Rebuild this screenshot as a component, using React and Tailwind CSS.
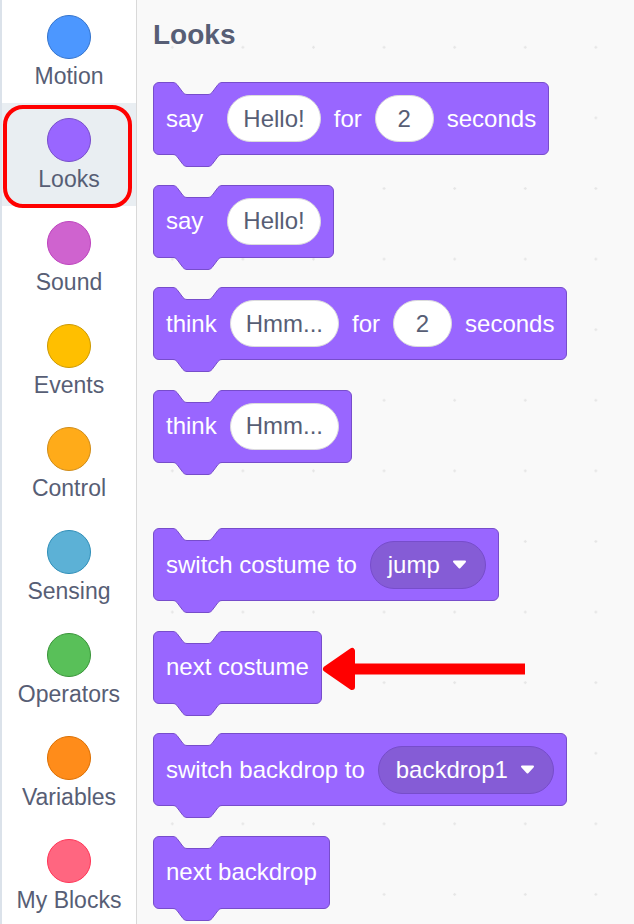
import React from "react";

const FONT = { fontFamily: '"Liberation Sans", Arial, sans-serif' };

const categories = [
  { name: "Motion", fill: "bg-[#4c97ff]", border: "border-[#3373cc]" },
  { name: "Looks", fill: "bg-[#9966ff]", border: "border-[#774dcb]", selected: true },
  { name: "Sound", fill: "bg-[#cf63cf]", border: "border-[#bd42bd]" },
  { name: "Events", fill: "bg-[#ffbf00]", border: "border-[#cc9900]" },
  { name: "Control", fill: "bg-[#ffab19]", border: "border-[#cf8b17]" },
  { name: "Sensing", fill: "bg-[#5cb1d6]", border: "border-[#2e8eb8]" },
  { name: "Operators", fill: "bg-[#59c059]", border: "border-[#389438]" },
  { name: "Variables", fill: "bg-[#ff8c1a]", border: "border-[#db6e00]" },
  { name: "My Blocks", fill: "bg-[#ff6680]", border: "border-[#ff3355]" },
];

function Category({ c }) {
  return (
    <div
      className={
        "relative flex h-[103px] shrink-0 flex-col items-center pt-[15px] " +
        (c.selected ? "bg-[#e9eef2]" : "")
      }
    >
      <div className={"h-[44px] w-[44px] rounded-full border " + c.fill + " " + c.border} />
      <div className="mt-[3px] text-[23px] leading-[28px] text-[#575e75]">{c.name}</div>
      {c.selected && (
        <div className="absolute left-[1px] top-[2px] h-[103px] w-[129px] rounded-[20px] border-[4.5px] border-[#ff0000]" />
      )}
    </div>
  );
}

function Notch() {
  return (
    <svg
      className="absolute left-[19px] top-[-1px]"
      width="49"
      height="14"
      viewBox="0 0 49 14"
    >
      <path
        d="M0,0.5 C2,0.5 3,1.5 4,2.5 L10,10.5 C11,11.5 12,12.5 14,12.5 H35 C37,12.5 38,11.5 39,10.5 L45,2.5 C46,1.5 47,0.5 49,0.5 V0 H0 Z"
        fill="#f9f9f9"
      />
      <path
        d="M0,0.5 C2,0.5 3,1.5 4,2.5 L10,10.5 C11,11.5 12,12.5 14,12.5 H35 C37,12.5 38,11.5 39,10.5 L45,2.5 C46,1.5 47,0.5 49,0.5"
        fill="none"
        stroke="#774dcb"
        strokeWidth="1"
      />
    </svg>
  );
}

function Tab() {
  return (
    <svg
      className="absolute left-[19px] top-full"
      width="49"
      height="14"
      viewBox="0 0 49 14"
    >
      <path
        d="M0,0 H49 V0.5 C47,0.5 46,1.5 45,2.5 L39,10.5 C38,11.5 37,12.5 35,12.5 H14 C12,12.5 11,11.5 10,10.5 L4,2.5 C3,1.5 2,0.5 0,0.5 Z"
        fill="#9966ff"
      />
      <path
        d="M0,0.5 C2,0.5 3,1.5 4,2.5 L10,10.5 C11,11.5 12,12.5 14,12.5 H35 C37,12.5 38,11.5 39,10.5 L45,2.5 C46,1.5 47,0.5 49,0.5"
        fill="none"
        stroke="#774dcb"
        strokeWidth="1"
      />
    </svg>
  );
}

function Label({ text, extra }) {
  return <span className={"whitespace-nowrap " + (extra ? "mr-[11px]" : "")}>{text}</span>;
}

function TextInput({ text }) {
  return (
    <span className="flex h-[47px] items-center whitespace-nowrap rounded-full border border-[#dcdcdc] bg-white px-[15px] text-[#575e75]">
      {text}
    </span>
  );
}

function NumInput({ text }) {
  return (
    <span className="flex h-[47px] w-[59px] items-center justify-center rounded-full border border-[#dcdcdc] bg-white text-[#575e75]">
      {text}
    </span>
  );
}

function Dropdown({ text }) {
  return (
    <span className="flex h-[48px] items-center gap-[12px] whitespace-nowrap rounded-full border border-[#774dcb] bg-[#855cd6] pl-[17px] pr-[18px] text-white">
      <span>{text}</span>
      <svg width="15" height="9" viewBox="0 0 15 9">
        <path d="M2,1.5 H13 L7.5,7.5 Z" fill="#ffffff" stroke="#ffffff" strokeWidth="2" strokeLinejoin="round" />
      </svg>
    </span>
  );
}

function Block({ children, className = "" }) {
  return (
    <div
      className={
        "relative flex h-[73px] w-fit items-center gap-[13px] rounded-[6px] border border-[#774dcb] bg-[#9966ff] pl-[12px] pr-[12px] text-[24px] text-white " +
        className
      }
    >
      <Notch />
      {children}
      <Tab />
    </div>
  );
}

export default function App() {
  return (
    <div className="flex h-[924px] w-[634px] overflow-hidden bg-[#f9f9f9]" style={FONT}>
      <div className="flex w-[137px] shrink-0 flex-col border-l-2 border-r border-l-[#dbe2ea] border-r-[#d9d9d9] bg-white">
        {categories.map((c) => (
          <Category key={c.name} c={c} />
        ))}
      </div>
      <div className="relative flex-1 bg-[#f9f9f9] bg-[radial-gradient(circle,#e6e6e6_1px,transparent_1.5px)] bg-[length:70.6px_70.6px] bg-[position:0_12px] pl-[16px] pt-[19px]">
        <div className="mb-[31px] text-[28px] font-bold leading-[32px] text-[#575e75]">Looks</div>
        <div className="flex flex-col gap-[29.5px]">
          <Block>
            <Label text="say" extra />
            <TextInput text="Hello!" />
            <Label text="for" />
            <NumInput text="2" />
            <Label text="seconds" />
          </Block>
          <Block>
            <Label text="say" extra />
            <TextInput text="Hello!" />
          </Block>
          <Block>
            <Label text="think" />
            <TextInput text="Hmm..." />
            <Label text="for" />
            <NumInput text="2" />
            <Label text="seconds" />
          </Block>
          <Block>
            <Label text="think" />
            <TextInput text="Hmm..." />
          </Block>
          <Block className="mt-[36px]">
            <Label text="switch costume to" />
            <Dropdown text="jump" />
          </Block>
          <Block>
            <Label text="next costume" />
          </Block>
          <Block>
            <Label text="switch backdrop to" />
            <Dropdown text="backdrop1" />
          </Block>
          <Block>
            <Label text="next backdrop" />
          </Block>
        </div>
        <svg
          className="absolute left-[185px] top-[646px]"
          width="204"
          height="46"
          viewBox="0 0 204 46"
        >
          <rect x="28" y="17.5" width="175" height="11" fill="#ff0000" />
          <polygon
            points="4,23 30,5 30,41"
            fill="#ff0000"
            stroke="#ff0000"
            strokeWidth="6"
            strokeLinejoin="round"
          />
        </svg>
      </div>
    </div>
  );
}
